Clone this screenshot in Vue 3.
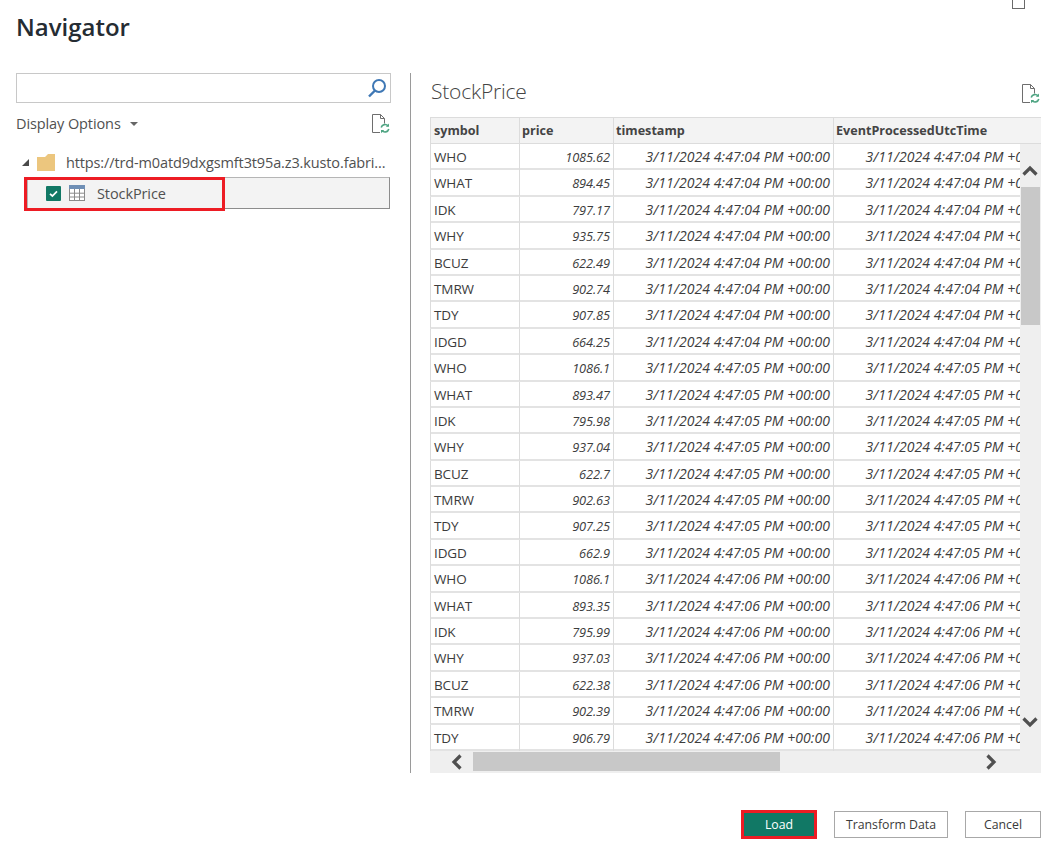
<script setup>
const groups = [
  ['04', [['WHO','1085.62'],['WHAT','894.45'],['IDK','797.17'],['WHY','935.75'],['BCUZ','622.49'],['TMRW','902.74'],['TDY','907.85'],['IDGD','664.25']]],
  ['05', [['WHO','1086.1'],['WHAT','893.47'],['IDK','795.98'],['WHY','937.04'],['BCUZ','622.7'],['TMRW','902.63'],['TDY','907.25'],['IDGD','662.9']]],
  ['06', [['WHO','1086.1'],['WHAT','893.35'],['IDK','795.99'],['WHY','937.03'],['BCUZ','622.38'],['TMRW','902.39'],['TDY','906.79']]]
]
const rows = groups.flatMap(([s, list]) =>
  list.map(([symbol, price]) => ({ symbol, price, time: `3/11/2024 4:47:${s} PM +00:00` }))
)
</script>

<template>
  <div class="page">
    <div class="max-stub"></div>
    <h1 class="title">Navigator</h1>

    <div class="main">
      <section class="left">
        <div class="search">
          <svg class="search-icon" width="20" height="20" viewBox="0 0 20 20">
            <circle cx="12" cy="8" r="6" fill="none" stroke="#3f78b5" stroke-width="2" />
            <path d="M8 12.5 2 18.5" stroke="#3f78b5" stroke-width="2.4" fill="none" />
          </svg>
        </div>
        <div class="options">
          <span class="display">Display Options</span>
          <span class="caret"></span>
          <svg class="doc doc-left" width="20" height="20" viewBox="0 0 20 20">
            <path d="M9 18.500H1.500V.5h8l4 4v5M9.500.5v4h4" fill="none" stroke="#6e6e6e" />
            <path d="M10.200 13.500a4 4 0 0 1 6.900-1.600M17.800 15a4 4 0 0 1-6.900 1.600" fill="none" stroke="#4fa583" stroke-width="1.6" />
            <path d="M18 9.600v3.200h-3.200zM10 19.200V16h3.200z" fill="#4fa583" />
          </svg>
        </div>
        <div class="tree-root">
          <span class="expander"></span>
          <svg class="folder" width="18" height="17" viewBox="0 0 18 17">
            <path d="M0 3h8l3-3h7v17H0z" fill="#ecc67e" />
          </svg>
          <span class="url">https://trd-m0atd9dxgsmft3t95a.z3.kusto.fabri...</span>
        </div>
        <div class="tree-item">
          <span class="check">
            <svg width="15" height="15" viewBox="0 0 15 15">
              <path d="M4 7.800 6.400 10 11 5.400" fill="none" stroke="#fff" stroke-width="1.7" />
            </svg>
          </span>
          <svg class="grid-icon" width="16" height="16" viewBox="0 0 16 16">
            <rect x=".5" y=".5" width="15" height="15" fill="#fff" stroke="#8a8a8a" />
            <rect x="0" y="0" width="16" height="4" fill="#6f8fb5" />
            <path d="M5.500 4v12M10.500 4v12M0 8.200h16M0 12h16" stroke="#8a8a8a" fill="none" />
          </svg>
          <span class="item-name">StockPrice</span>
          <span class="red-box"></span>
        </div>
      </section>

      <div class="divider"></div>

      <section class="right">
        <div class="right-head">
          <h2 class="table-name">StockPrice</h2>
          <svg class="doc" width="20" height="20" viewBox="0 0 20 20">
            <path d="M9 18.500H1.500V.5h8l4 4v5M9.500.5v4h4" fill="none" stroke="#6e6e6e" />
            <path d="M10.200 13.500a4 4 0 0 1 6.900-1.600M17.800 15a4 4 0 0 1-6.900 1.600" fill="none" stroke="#4fa583" stroke-width="1.6" />
            <path d="M18 9.600v3.200h-3.200zM10 19.200V16h3.200z" fill="#4fa583" />
          </svg>
        </div>

        <div class="table">
          <div class="thead">
            <div class="th">symbol</div>
            <div class="th">price</div>
            <div class="th">timestamp</div>
            <div class="th">EventProcessedUtcTime</div>
          </div>
          <div class="body-wrap">
            <div class="tbody">
              <div v-for="(r, i) in rows" :key="i" class="tr">
                <div class="td sym">{{ r.symbol }}</div>
                <div class="td num">{{ r.price }}</div>
                <div class="td num date">{{ r.time }}</div>
                <div class="td num date">{{ r.time }}</div>
              </div>
            </div>
            <div class="vbar">
              <svg class="chev-up" width="16" height="11" viewBox="0 0 16 11">
                <path d="M1.500 9.500 8 3l6.500 6.500" fill="none" stroke="#505050" stroke-width="3.2" />
              </svg>
              <div class="vthumb"></div>
              <svg class="chev-down" width="16" height="11" viewBox="0 0 16 11">
                <path d="M1.500 1.500 8 8l6.500-6.500" fill="none" stroke="#505050" stroke-width="3.2" />
              </svg>
            </div>
          </div>
          <div class="hbar">
            <svg class="chev-left" width="11" height="16" viewBox="0 0 11 16">
              <path d="M9.500 1.500 3 8l6.500 6.500" fill="none" stroke="#505050" stroke-width="3.2" />
            </svg>
            <div class="hthumb"></div>
            <svg class="chev-right" width="11" height="16" viewBox="0 0 11 16">
              <path d="M1.500 1.500 8 8l-6.500 6.500" fill="none" stroke="#505050" stroke-width="3.2" />
            </svg>
          </div>
        </div>
      </section>
    </div>

    <footer class="footer">
      <button class="btn primary">Load</button>
      <button class="btn transform">Transform Data</button>
      <button class="btn cancel">Cancel</button>
    </footer>
  </div>
</template>

<style>
html, body { margin: 0; background: #fff; }
</style>

<style scoped>
.page {
  position: relative;
  width: 1051px;
  height: 853px;
  overflow: hidden;
  background: #fff;
  color: #3a3a3a;
  font-family: "Open Sans", "Noto Sans", sans-serif;
  box-sizing: border-box;
}
.max-stub {
  position: absolute;
  left: 1012px;
  top: -4px;
  width: 11px;
  height: 11px;
  border: 1px solid #6a6a6a;
}
.title {
  margin: 0;
  padding: 11px 0 0 16px;
  height: 73px;
  box-sizing: border-box;
  font-size: 24px;
  line-height: 31px;
  font-weight: 600;
  color: #252c33;
}
.main { display: flex; height: 700px; }
.left { width: 374px; margin-left: 16px; flex: none; }
.search {
  height: 30px;
  margin-right: -1px;
  box-sizing: border-box;
  border: 1px solid #c8c8c8;
  display: flex;
  align-items: center;
  justify-content: flex-end;
  padding-right: 3px;
}
.options {
  display: flex;
  align-items: center;
  height: 41px;
  box-sizing: border-box;
}
.display { font-size: 14.5px; letter-spacing: -.1px; color: #505050; }
.caret {
  margin-left: 9px;
  margin-top: 1px;
  border: 4px solid transparent;
  border-top: 4px solid #666;
  border-bottom: 0;
}
.doc-left { margin-left: auto; margin-right: -1px; margin-top: 1px; }
.tree-root {
  display: flex;
  align-items: center;
  height: 29px;
  margin-top: 4px;
  padding-left: 6px;
}
.expander {
  width: 0;
  height: 0;
  border-left: 7px solid transparent;
  border-bottom: 7px solid #4a4a4a;
  margin-right: 8px;
}
.folder { margin-right: 11px; flex: none; }
.url { font-size: 14.5px; letter-spacing: -.13px; color: #505050; white-space: nowrap; }
.tree-item {
  position: relative;
  display: flex;
  align-items: center;
  height: 32px;
  margin-left: 11px;
  box-sizing: border-box;
  padding-left: 18px;
  background: #f3f3f3;
  border: 1px solid #b5b5b5;
  border-right-color: #8c8c8c;
  border-bottom-color: #8c8c8c;
}
.check {
  width: 15px;
  height: 15px;
  background: #117865;
  border-radius: 1px;
  flex: none;
  display: flex;
}
.grid-icon { margin-left: 8px; flex: none; }
.item-name { margin-left: 12px; font-size: 14.5px; letter-spacing: -.1px; color: #505050; }
.red-box {
  position: absolute;
  left: -4px;
  top: -1px;
  width: 201px;
  height: 34px;
  box-sizing: border-box;
  border: 3px solid #ed1c24;
}
.divider { width: 1px; margin-left: 20px; background: #9a9a9a; flex: none; }
.right { margin-left: 19px; width: 611px; flex: none; }
.right-head {
  height: 44px;
  position: relative;
  display: flex;
  justify-content: space-between;
  align-items: flex-start;
}
.table-name {
  margin: 0;
  padding: 4px 0 0 1px;
  font-size: 21px;
  line-height: 29px;
  font-weight: 300;
  letter-spacing: -.2px;
  color: #444;
}
.right-head .doc { margin-top: 11px; }
.table { display: flex; flex-direction: column; height: 656px; }
.thead {
  display: grid;
  grid-template-columns: 89px 94px 220px 208px;
  height: 27px;
  flex: none;
  background: #f3f3f3;
  border-top: 1px solid #dcdcdc;
  border-bottom: 1px solid #dcdcdc;
  box-sizing: border-box;
}
.th {
  font-size: 12.6px;
  font-weight: 700;
  line-height: 25px;
  padding-left: 2px;
  color: #444;
  border-left: 1px solid #dcdcdc;
  white-space: nowrap;
  overflow: hidden;
}
.th:first-child { padding-left: 3px; }
.body-wrap { position: relative; height: 607px; flex: none; overflow: hidden; }
.tbody { display: flex; flex-direction: column; height: 607px; width: 590px; overflow: hidden; }
.tr {
  flex: 1;
  display: grid;
  grid-template-columns: 89px 94px 220px 220px;
  min-height: 0;
  border-bottom: 2px solid #e3e3e3;
  box-sizing: border-box;
  width: 623px;
}
.td {
  font-size: 12.8px;
  line-height: 26px;
  padding: 0 3px 0 2px;
  color: #3c3c3c;
  border-left: 1px solid #dcdcdc;
  white-space: nowrap;
  letter-spacing: -.1px;
}
.sym { font-size: 13.5px; padding-left: 3px; }
.num { text-align: right; font-style: italic; }
.date { font-size: 14px; letter-spacing: .08px; }
.vbar {
  position: absolute;
  right: 0;
  top: 0;
  bottom: 0;
  width: 21px;
  background: #efefef;
}
.vthumb { position: absolute; left: 1px; top: 43px; width: 19px; height: 138px; background: #c8c8c8; }
.chev-up { position: absolute; left: 2px; top: 21px; }
.chev-down { position: absolute; left: 2px; top: 573px; }
.hbar { position: relative; height: 22px; flex: none; background: #efefef; }
.hthumb { position: absolute; left: 43px; top: 1px; width: 307px; height: 19px; background: #c8c8c8; }
.chev-left { position: absolute; left: 21px; top: 3px; }
.chev-right { position: absolute; left: 556px; top: 3px; }
.footer {
  display: flex;
  justify-content: flex-end;
  align-items: center;
  padding: 37px 10px 0 0;
  gap: 17px;
}
.btn {
  height: 27px;
  box-sizing: border-box;
  background: #fff;
  border: 1px solid #a8a8a8;
  font: inherit;
  font-size: 12.3px;
  color: #3a3a3a;
  padding: 0;
}
.primary {
  width: 76px;
  height: 29px;
  background: #117865;
  color: #fff;
  border: 3px solid #ed1c24;
}
.transform { width: 114px; }
.cancel { width: 76px; }
</style>
